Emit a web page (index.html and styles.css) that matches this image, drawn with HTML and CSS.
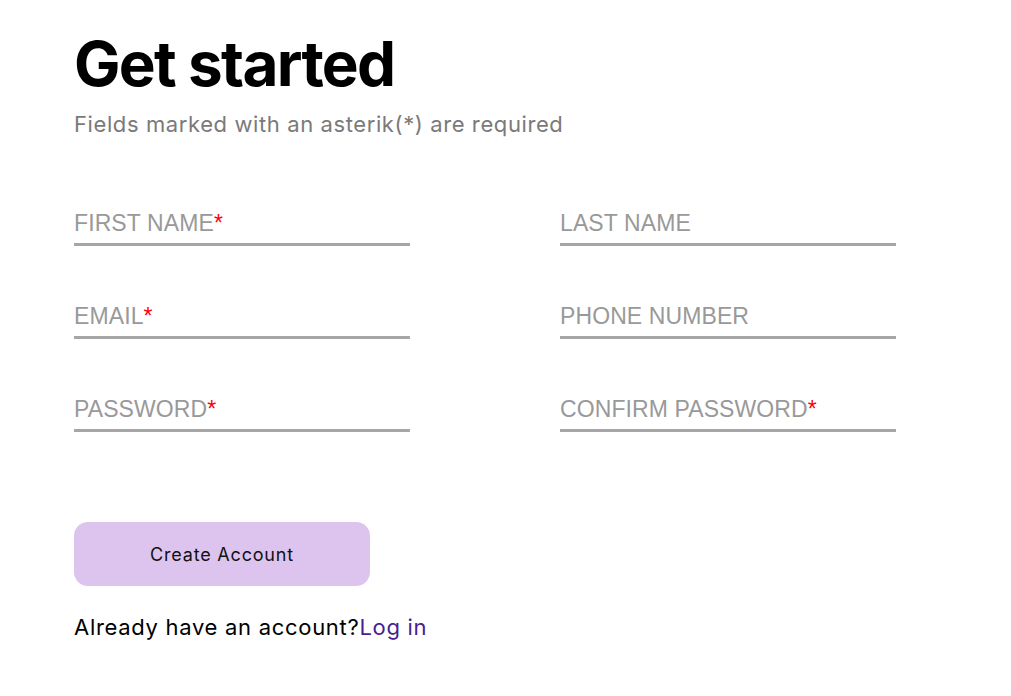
FILE: index.html
```html
<!DOCTYPE html>
<html>
<head>
<meta charset="utf-8">
<link rel="stylesheet" href="styles.css">
</head>
<body>
<main class="page">
  <h1 class="title">Get started</h1>
  <p class="subtitle">Fields marked with an asterik(*) are required</p>
  <form class="form">
    <div class="grid">
      <label class="field"><span class="label">FIRST NAME<span class="req">*</span></span></label>
      <label class="field"><span class="label">LAST NAME</span></label>
      <label class="field"><span class="label">EMAIL<span class="req">*</span></span></label>
      <label class="field"><span class="label">PHONE NUMBER</span></label>
      <label class="field"><span class="label">PASSWORD<span class="req">*</span></span></label>
      <label class="field"><span class="label">CONFIRM PASSWORD<span class="req">*</span></span></label>
    </div>
    <button type="button" class="btn">Create Account</button>
    <p class="login">Already have an account?<a href="#" class="link">Log in</a></p>
  </form>
</main>
</body>
</html>
```
FILE: styles.css
```css
html, body {
  margin: 0;
  padding: 0;
  background: #fff;
}
.page {
  padding: 28px 0 0 74px;
  font-family: Inter, "Liberation Sans", sans-serif;
}
.title {
  margin: 0;
  font-size: 62px;
  font-weight: 700;
  line-height: 72px;
  letter-spacing: -1.7px;
  color: #000;
}
.subtitle {
  margin: 10px 0 0 0;
  font-size: 22px;
  line-height: 28px;
  letter-spacing: 0.6px;
  color: #7a7a7a;
}
.grid {
  margin-top: 72px;
  display: grid;
  grid-template-columns: 336px 336px;
  column-gap: 150px;
  row-gap: 57px;
}
.field {
  display: block;
  padding-bottom: 7px;
  border-bottom: 3px solid #a6a6a6;
}
.label {
  display: block;
  font-family: "Liberation Sans", Arial, sans-serif;
  font-size: 23px;
  line-height: 26px;
  letter-spacing: 0.1px;
  color: #999;
}
.req {
  color: #ff0000;
}
.btn {
  display: block;
  margin-top: 90px;
  width: 296px;
  height: 64px;
  border: none;
  border-radius: 14px;
  background: #dcc4ef;
  font-family: Inter, "Liberation Sans", sans-serif;
  font-size: 18px;
  letter-spacing: 0.8px;
  color: #111;
}
.login {
  margin: 27px 0 0 0;
  font-size: 22px;
  line-height: 28px;
  letter-spacing: 0.7px;
  color: #000;
}
.link {
  color: #4a1d8e;
  text-decoration: none;
}
```
